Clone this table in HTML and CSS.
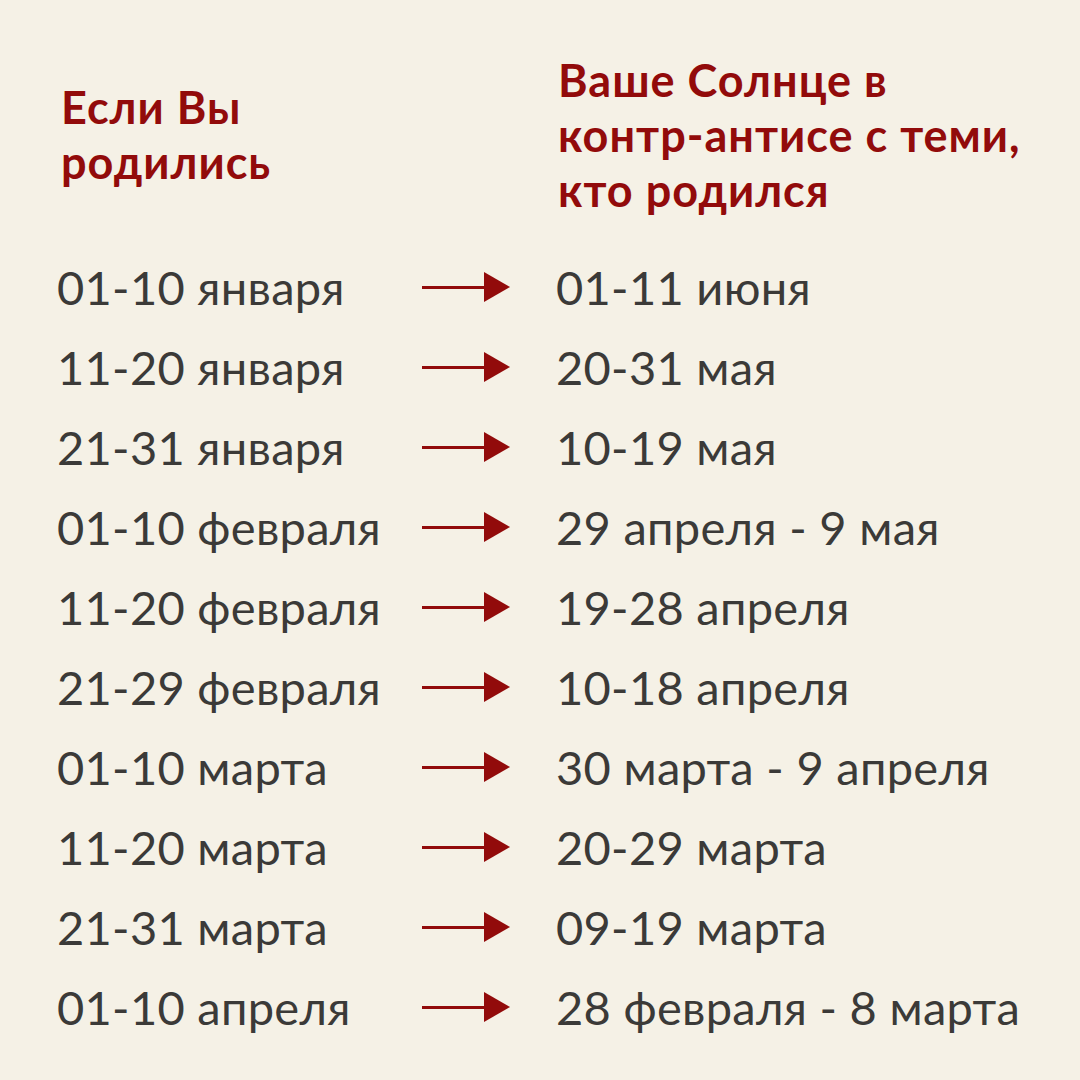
FILE: index.html
```html
<!DOCTYPE html>
<html lang="ru">
<head>
<meta charset="utf-8">
<link rel="stylesheet" href="styles.css">
</head>
<body>
<div class="page">
  <div class="head">
    <div class="h-left">Если Вы<br>родились</div>
    <div class="h-right">Ваше Солнце в<br>контр-антисе с теми,<br>кто родился</div>
  </div>
  <div class="rows">
    <div class="row"><span class="from">01-10 января</span><span class="arrow"></span><span class="to">01-11 июня</span></div>
    <div class="row"><span class="from">11-20 января</span><span class="arrow"></span><span class="to">20-31 мая</span></div>
    <div class="row"><span class="from">21-31 января</span><span class="arrow"></span><span class="to">10-19 мая</span></div>
    <div class="row"><span class="from">01-10 февраля</span><span class="arrow"></span><span class="to">29 апреля - 9 мая</span></div>
    <div class="row"><span class="from">11-20 февраля</span><span class="arrow"></span><span class="to">19-28 апреля</span></div>
    <div class="row"><span class="from">21-29 февраля</span><span class="arrow"></span><span class="to">10-18 апреля</span></div>
    <div class="row"><span class="from">01-10 марта</span><span class="arrow"></span><span class="to">30 марта - 9 апреля</span></div>
    <div class="row"><span class="from">11-20 марта</span><span class="arrow"></span><span class="to">20-29 марта</span></div>
    <div class="row"><span class="from">21-31 марта</span><span class="arrow"></span><span class="to">09-19 марта</span></div>
    <div class="row"><span class="from">01-10 апреля</span><span class="arrow"></span><span class="to">28 февраля - 8 марта</span></div>
  </div>
</div>
</body>
</html>
```
FILE: styles.css
```css
html, body {
  margin: 0;
  padding: 0;
  background: #f5f1e6;
}
.page {
  width: 1080px;
  height: 1080px;
  box-sizing: border-box;
  padding: 53px 0 0 57px;
  font-family: Lato, "Noto Sans", sans-serif;
}
.head {
  display: grid;
  grid-template-columns: 499px 1fr;
  color: #920b0b;
  font-weight: 700;
  font-size: 45px;
  letter-spacing: 1px;
  line-height: 55px;
}
.h-left {
  padding-top: 27px;
  padding-left: 4px;
}
.h-right {
  padding-left: 2px;
}
.rows {
  margin-top: 29px;
  display: flex;
  flex-direction: column;
}
.row {
  display: grid;
  grid-template-columns: 365px 88px 1fr;
  align-items: center;
  height: 80px;
  font-size: 47px;
  letter-spacing: 0.3px;
  color: #3b3a38;
}
.to {
  padding-left: 46px;
}
.arrow {
  position: relative;
  height: 30px;
}
.arrow::before {
  content: "";
  position: absolute;
  left: 0;
  right: 24px;
  top: 13.5px;
  height: 3px;
  background: #920b0b;
}
.arrow::after {
  content: "";
  position: absolute;
  right: 0;
  top: 0;
  border-left: 26px solid #920b0b;
  border-top: 15px solid transparent;
  border-bottom: 15px solid transparent;
}
```
